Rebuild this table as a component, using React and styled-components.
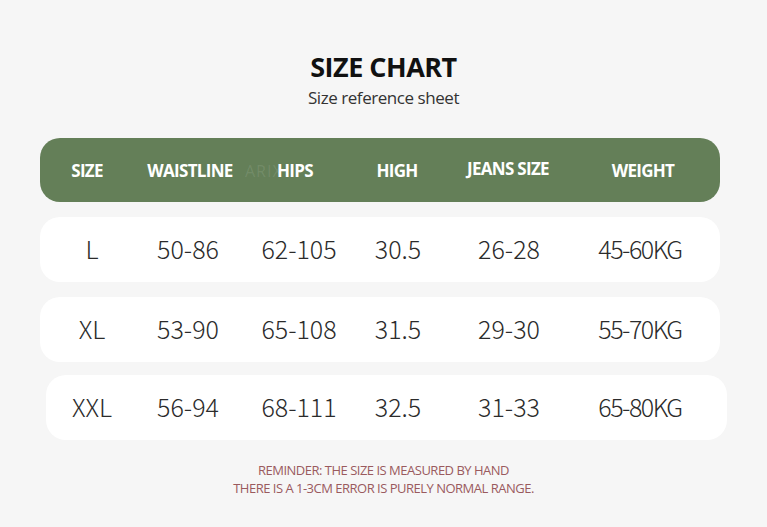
import React from "react";
import styled, { createGlobalStyle } from "styled-components";

const GlobalStyle = createGlobalStyle`
  html, body {
    margin: 0;
    padding: 0;
    background: #f6f6f6;
  }
  body {
    font-family: "Open Sans", "Noto Sans", sans-serif;
  }
`;

const HEAD_COLUMNS = "94px 112px 98px 106px 116px 154px";
const ROW_COLUMNS = "104px 88px 134px 64px 158px 104px";

const Page = styled.div`
  width: 767px;
  height: 527px;
  display: flex;
  flex-direction: column;
  align-items: center;
  padding-top: 49px;
  box-sizing: border-box;
  overflow: hidden;
`;

const Title = styled.h1`
  margin: 0;
  font-size: 27px;
  line-height: 36px;
  font-weight: 700;
  letter-spacing: -0.5px;
  color: #111;
`;

const Subtitle = styled.div`
  margin-top: 2px;
  font-size: 17px;
  line-height: 22px;
  color: #333;
  letter-spacing: -0.45px;
`;

const Table = styled.div`
  width: 680px;
  align-self: flex-start;
  margin-left: 40px;
  margin-top: 29px;
  display: flex;
  flex-direction: column;
  gap: 15px;
`;

const HeaderBar = styled.div`
  position: relative;
  height: 64px;
  border-radius: 20px;
  background: #647f58;
  display: grid;
  grid-template-columns: ${HEAD_COLUMNS};
  align-items: center;
  justify-items: center;
`;

const HeadCell = styled.div`
  font-size: 17px;
  font-weight: 700;
  letter-spacing: -0.7px;
  color: #fff;
  margin-top: ${(p) => (p.$raise ? "-4px" : "0")};
`;

const Watermark = styled.div`
  position: absolute;
  left: 205px;
  top: 22px;
  font-size: 16px;
  letter-spacing: 1px;
  color: rgba(255, 255, 255, 0.1);
  pointer-events: none;
`;

const RowBox = styled.div`
  height: 65px;
  border-radius: 20px;
  background: #fff;
  margin-left: ${(p) => (p.$shift ? "6px" : "0")};
  margin-right: ${(p) => (p.$shift ? "-7px" : "0")};
  margin-top: ${(p) => (p.$shift ? "-2px" : "0")};
`;

const RowGrid = styled.div`
  height: 100%;
  display: grid;
  grid-template-columns: ${ROW_COLUMNS};
  align-items: center;
  justify-items: center;
  margin-left: ${(p) => (p.$shift ? "-6px" : "0")};
`;

const Cell = styled.div`
  margin-top: -3px;
  font-family: "Noto Sans CJK SC", "Noto Sans", sans-serif;
  font-size: 25px;
  font-weight: 300;
  color: #2b2b2b;
  letter-spacing: ${(p) => (p.$tight ? "-1.5px" : "0")};
`;

const Reminder = styled.div`
  margin-top: 21px;
  text-align: center;
  font-size: 13px;
  line-height: 18px;
  letter-spacing: -0.5px;
  color: #9a5a5e;
`;

const headers = ["SIZE", "WAISTLINE", "HIPS", "HIGH", "JEANS SIZE", "WEIGHT"];

const rows = [
  ["L", "50-86", "62-105", "30.5", "26-28", "45-60KG"],
  ["XL", "53-90", "65-108", "31.5", "29-30", "55-70KG"],
  ["XXL", "56-94", "68-111", "32.5", "31-33", "65-80KG"],
];

export default function App() {
  return (
    <Page>
      <GlobalStyle />
      <Title>SIZE CHART</Title>
      <Subtitle>Size reference sheet</Subtitle>
      <Table>
        <HeaderBar>
          <Watermark>ARIX</Watermark>
          {headers.map((h) => (
            <HeadCell key={h} $raise={h === "JEANS SIZE"}>
              {h}
            </HeadCell>
          ))}
        </HeaderBar>
        {rows.map((row, i) => (
          <RowBox key={row[0]} $shift={i === 2}>
            <RowGrid $shift={i === 2}>
              {row.map((v, j) => (
                <Cell key={j} $tight={j === 5}>
                  {v}
                </Cell>
              ))}
            </RowGrid>
          </RowBox>
        ))}
      </Table>
      <Reminder>
        REMINDER: THE SIZE IS MEASURED BY HAND
        <br />
        THERE IS A 1-3CM ERROR IS PURELY NORMAL RANGE.
      </Reminder>
    </Page>
  );
}
